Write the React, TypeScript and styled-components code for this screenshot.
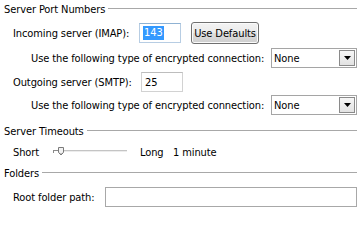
import React from "react";
import styled, { createGlobalStyle } from "styled-components";

const Global = createGlobalStyle`
  html, body { margin: 0; padding: 0; background: #ffffff; }
  body { font-family: "DejaVu Sans Condensed", "Liberation Sans", sans-serif; font-size: 11px; letter-spacing: -0.1px; color: #000; }
`;

const Panel = styled.div`
  width: 363px;
  height: 218px;
  box-sizing: border-box;
  padding: 0 6px 0 4px;
  display: flex;
  flex-direction: column;
  background: #fff;
  overflow: hidden;
`;

const GroupHeader = styled.div<{ $top?: number }>`
  display: flex;
  align-items: center;
  height: 18px;
  margin-top: ${(p) => p.$top ?? 0}px;
  white-space: nowrap;
  &::after {
    content: "";
    flex: 1;
    height: 1px;
    background: #a8a8a8;
    margin-left: 3px;
    margin-top: -1px;
  }
`;

const Row = styled.div<{ $top: number; $h: number; $indent: number }>`
  display: flex;
  align-items: center;
  height: ${(p) => p.$h}px;
  margin-top: ${(p) => p.$top}px;
  padding-left: ${(p) => p.$indent}px;
  white-space: nowrap;
`;

const Label = styled.span<{ $w?: number }>`
  display: inline-block;
  ${(p) => (p.$w ? `width: ${p.$w}px;` : "")}
  flex-shrink: 0;
`;

const TextBox = styled.div<{ $w: number; $focus?: boolean }>`
  box-sizing: border-box;
  width: ${(p) => p.$w}px;
  height: 20px;
  border: 1px solid ${(p) => (p.$focus ? "#b7cde3" : "#d2d2d2")};
  border-top-color: ${(p) => (p.$focus ? "#8fb2d3" : "#bdbdbd")};
  background: #fff;
  display: flex;
  align-items: center;
  padding-left: 3px;
  flex-shrink: 0;
`;

const Selected = styled.span`
  background: #3399ff;
  color: #fff;
  padding: 0 1px;
  line-height: 14px;
`;

const Button = styled.div`
  box-sizing: border-box;
  width: 68px;
  height: 22px;
  margin-left: 10px;
  border: 1px solid #707070;
  border-radius: 3px;
  background: linear-gradient(#f3f3f3 0%, #ebebeb 48%, #dddddd 52%, #cfcfcf 100%);
  box-shadow: inset 0 0 0 1px #fbfbfb;
  display: flex;
  align-items: center;
  justify-content: center;
`;

const Select = styled.div`
  box-sizing: border-box;
  width: 86px;
  height: 20px;
  margin-left: auto;
  border: 1px solid #a5a5a5;
  background: #fff;
  display: flex;
  align-items: center;
  padding: 1px 1px 1px 2px;
  justify-content: space-between;
`;

const Arrow = styled.div`
  box-sizing: border-box;
  width: 16px;
  height: 16px;
  border: 1px solid #8a8a8a;
  background: linear-gradient(#f6f6f6, #e2e2e2);
  display: flex;
  align-items: center;
  justify-content: center;
`;

const Wide = styled(TextBox)`
  border-color: #a8a8a8;
  flex: 1;
`;

const SliderWrap = styled.div`
  width: 74px;
  height: 12px;
  margin-right: 13px;
  flex-shrink: 0;
  display: flex;
`;

function DropArrow() {
  return (
    <Arrow>
      <svg width="7" height="4" viewBox="0 0 7 4">
        <path d="M0 0 H7 L3.5 4 Z" fill="#000" />
      </svg>
    </Arrow>
  );
}

function Combo() {
  return (
    <Select>
      <span>None</span>
      <DropArrow />
    </Select>
  );
}

function Slider() {
  return (
    <SliderWrap>
      <svg width="74" height="12" viewBox="0 0 74 12">
        <rect x="5" y="4" width="69" height="1" fill="#c4c4c4" />
        <rect x="5" y="5" width="69" height="1" fill="#ececec" />
        <rect x="0" y="4" width="6" height="1" fill="#8a8a8a" />
        <rect x="0" y="4" width="1" height="3" fill="#8a8a8a" />
        <path d="M5.5 1.5 H10.5 V6.5 L8 9 L5.5 6.5 Z" fill="#f2f2f2" stroke="#7a7a7a" strokeWidth="1" />
        <path d="M6.5 6.5 L8 8 L9.5 6.5" fill="none" stroke="#bdbdbd" strokeWidth="1" />
      </svg>
    </SliderWrap>
  );
}

export default function App() {
  return (
    <>
      <Global />
      <Panel>
        <GroupHeader>Server Port Numbers</GroupHeader>
        <Row $top={4} $h={22} $indent={9}>
          <Label $w={126}>Incoming server (IMAP):</Label>
          <TextBox $w={42} $focus>
            <Selected>143</Selected>
          </TextBox>
          <Button>Use Defaults</Button>
        </Row>
        <Row $top={4} $h={20} $indent={27}>
          <Label>Use the following type of encrypted connection:</Label>
          <Combo />
        </Row>
        <Row $top={4} $h={20} $indent={9}>
          <Label $w={128}>Outgoing server (SMTP):</Label>
          <TextBox $w={42}>25</TextBox>
        </Row>
        <Row $top={3} $h={20} $indent={27}>
          <Label>Use the following type of encrypted connection:</Label>
          <Combo />
        </Row>
        <GroupHeader $top={7}>Server Timeouts</GroupHeader>
        <Row $top={2} $h={20} $indent={9}>
          <Label $w={40}>Short</Label>
          <Slider />
          <Label $w={33}>Long</Label>
          <Label>1 minute</Label>
        </Row>
        <GroupHeader $top={2}>Folders</GroupHeader>
        <Row $top={5} $h={20} $indent={9}>
          <Label $w={92}>Root folder path:</Label>
          <Wide $w={252} />
        </Row>
      </Panel>
    </>
  );
}
